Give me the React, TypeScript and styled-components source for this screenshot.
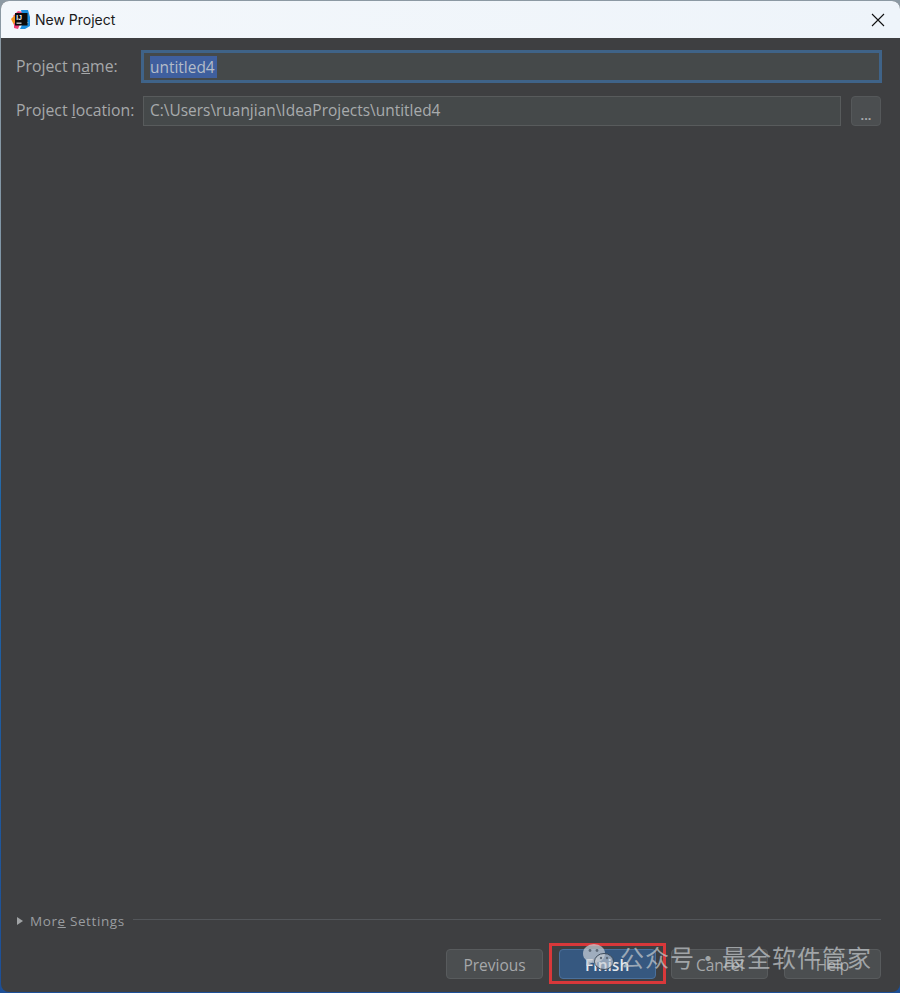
import React from "react";
import styled, { createGlobalStyle } from "styled-components";

const Global = createGlobalStyle`
  html, body { margin: 0; padding: 0; height: 100%; background: #2f6f9f; overflow: hidden; }
  body { font-family: "Open Sans", "Noto Sans", "Liberation Sans", sans-serif; }
`;

const Backdrop = styled.div`
  width: 900px;
  height: 993px;
  padding: 1px 0 1px 1px;
  box-sizing: border-box;
  background: linear-gradient(180deg, #8c99a3 0%, #7f97a8 30%, #1f66a8 50%, #1d4f96 100%);
`;

const Win = styled.div`
  position: relative;
  height: 100%;
  display: flex;
  flex-direction: column;
  border-radius: 8px;
  overflow: hidden;
  background: #3e3f41;
`;

const TitleBar = styled.div`
  height: 37px;
  flex: none;
  display: flex;
  align-items: center;
  gap: 5px;
  padding: 0 15px 0 10px;
  background: linear-gradient(90deg, #f3f7fb, #eef4fa);
  color: #1a1a1a;
  font-family: "Inter", "Liberation Sans", sans-serif;
  font-size: 14px;
`;

const TitleText = styled.span`
  flex: 1;
`;

const Body = styled.div`
  flex: 1;
  display: flex;
  flex-direction: column;
  padding: 12px 19px 13px 15px;
  min-height: 0;
  color: #a6a8aa;
  font-size: 15px;
`;

const Row = styled.div<{ $mb: number }>`
  display: flex;
  align-items: center;
  gap: 8px;
  margin-bottom: ${(p) => p.$mb}px;
`;

const Label = styled.label`
  width: 119px;
  flex: none;
  white-space: nowrap;
  font-size: 15.8px;
  line-height: 22px;
  padding-bottom: 2px;
`;

const Field = styled.div<{ $focus?: boolean }>`
  flex: 1;
  box-sizing: border-box;
  height: ${(p) => (p.$focus ? 33 : 30)}px;
  margin: 0 ${(p) => (p.$focus ? -1 : 0)}px 0 ${(p) => (p.$focus ? -2 : 0)}px;
  display: flex;
  align-items: center;
  padding: 0 0 ${(p) => (p.$focus ? 0 : 2)}px 6px;
  background: #45494a;
  border: ${(p) => (p.$focus ? "3px solid #3f6388" : "1px solid #585b5c")};
  color: #a8abad;
  font-size: 15.45px;
  white-space: nowrap;
`;

const Selected = styled.span`
  background: #3f5f9e;
  color: #b4bcc8;
  line-height: 22px;
  padding-right: 2px;
`;

const Browse = styled.button`
  width: 30px;
  height: 30px;
  margin-left: 2px;
  flex: none;
  padding: 0 0 2px;
  border: 1px solid #55585a;
  border-radius: 4px;
  background: #4b4e50;
  color: #a3a6a8;
  font: 700 13px "Liberation Sans", sans-serif;
  display: flex;
  align-items: flex-end;
  justify-content: center;
`;

const Spacer = styled.div`
  flex: 1;
`;

const SettingsRow = styled.div`
  display: flex;
  align-items: center;
  gap: 7px;
  padding-left: 1px;
  margin-bottom: 19px;
  font-size: 13.5px;
  letter-spacing: 0.6px;
  color: #9a9da0;
`;

const Caret = styled.span`
  width: 0;
  height: 0;
  border-left: 6px solid #a0a3a5;
  border-top: 4.5px solid transparent;
  border-bottom: 4.5px solid transparent;
`;

const Rule = styled.div`
  flex: 1;
  height: 1px;
  margin: -3px 0 0 1px;
  background: #53565a;
`;

const Footer = styled.div`
  display: flex;
  justify-content: flex-end;
  gap: 15.67px;
`;

const Btn = styled.button<{ $primary?: boolean }>`
  width: 97px;
  height: 30px;
  padding: 1px 0 0;
  box-sizing: border-box;
  border-radius: 4px;
  border: 1px solid ${(p) => (p.$primary ? "#4a709c" : "#585b5d")};
  background: ${(p) => (p.$primary ? "#365880" : "#4b4e50")};
  color: ${(p) => (p.$primary ? "#e4e8ec" : "#a6a8aa")};
  font-family: inherit;
  font-size: 15.5px;
  font-weight: ${(p) => (p.$primary ? 600 : 400)};
`;

const Highlight = styled.div`
  position: absolute;
  left: 548px;
  top: 942px;
  width: 117px;
  height: 41px;
  box-sizing: border-box;
  border: 3px solid #d8383a;
`;

const Watermark = styled.div`
  position: absolute;
  left: 581px;
  top: 938px;
  display: flex;
  align-items: center;
  gap: 6px;
  color: rgba(195, 200, 203, 0.72);
  font-family: "Noto Sans CJK SC", sans-serif;
  font-size: 24px;
  letter-spacing: 1px;
  white-space: nowrap;
`;

const Dot = styled.span`
  margin: 0 1px;
`;

const Logo = () => (
  <svg width="19" height="19" viewBox="0 0 19 19">
    <path d="M2 6 L7 1 L12 2 L7 10 Z" fill="#f0477d" />
    <path d="M10 0 H17 L19 7 V14 L12 9 Z" fill="#1c8fe0" />
    <path d="M0 9 L5 4 L7 13 L3 15 Z" fill="#f7941e" />
    <path d="M3 13 L9 14 L7 19 L3 18 Z" fill="#ee3d77" />
    <path d="M12 13 H19 V16 L14 19 H9 Z" fill="#1c8fe0" />
    <rect x="4" y="3" width="12.5" height="12.5" fill="#0b0b0b" />
    <text x="5.3" y="10.2" fontSize="6.6" fontWeight="700" fill="#fff" fontFamily="Liberation Sans, sans-serif">IJ</text>
    <rect x="5.5" y="12.6" width="5" height="1.1" fill="#fff" />
  </svg>
);

const CloseIcon = () => (
  <svg width="14" height="14" viewBox="0 0 14 14">
    <path d="M1 1 L13 13 M13 1 L1 13" stroke="#111" strokeWidth="1.1" fill="none" />
  </svg>
);

const WeChat = () => (
  <svg width="32" height="28" viewBox="0 0 32 28">
    <ellipse cx="12" cy="10.5" rx="11" ry="9.5" fill="rgba(200,207,214,0.72)" />
    <path d="M5 16 L4 23 L11 19 Z" fill="rgba(200,207,214,0.72)" />
    <ellipse cx="22" cy="18.5" rx="9.5" ry="8" fill="rgba(200,207,214,0.62)" stroke="#3c4a5a" strokeWidth="1" />
    <circle cx="8" cy="7.5" r="1.4" fill="#5e6a78" />
    <circle cx="15" cy="7.5" r="1.4" fill="#5e6a78" />
    <circle cx="19" cy="15" r="1.2" fill="#5e6a78" />
    <circle cx="25" cy="15" r="1.2" fill="#5e6a78" />
  </svg>
);

export default function App() {
  return (
    <>
      <Global />
      <Backdrop>
        <Win>
          <TitleBar>
            <Logo />
            <TitleText>New Project</TitleText>
            <CloseIcon />
          </TitleBar>
          <Body>
            <Row $mb={13}>
              <Label>Project n<u>a</u>me:</Label>
              <Field $focus><Selected>untitled4</Selected></Field>
            </Row>
            <Row $mb={0}>
              <Label>Project <u>l</u>ocation:</Label>
              <Field>C:\Users\ruanjian\IdeaProjects\untitled4</Field>
              <Browse>...</Browse>
            </Row>
            <Spacer />
            <SettingsRow>
              <Caret />
              <span>Mor<u>e</u> Settings</span>
              <Rule />
            </SettingsRow>
            <Footer>
              <Btn>Previous</Btn>
              <Btn $primary>Finish</Btn>
              <Btn>Cancel</Btn>
              <Btn>Help</Btn>
            </Footer>
          </Body>
          <Highlight />
          <Watermark>
            <WeChat />
            <span>公众号<Dot>·</Dot>最全软件管家</span>
          </Watermark>
        </Win>
      </Backdrop>
    </>
  );
}
